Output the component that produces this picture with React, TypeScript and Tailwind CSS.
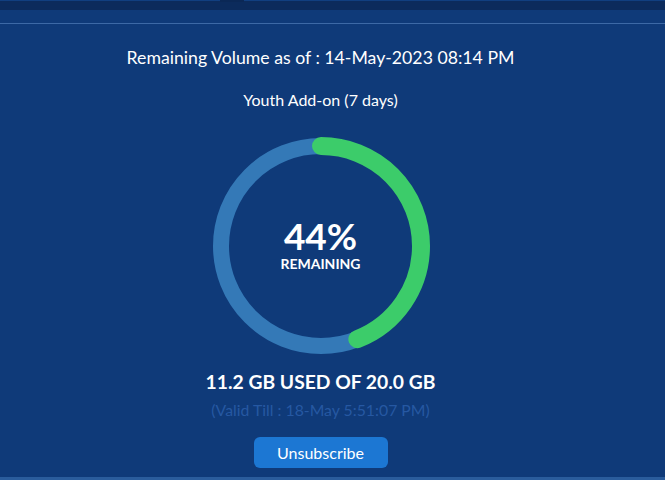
import React from 'react';

const usage = {
  asOf: '14-May-2023 08:14 PM',
  plan: 'Youth Add-on (7 days)',
  usedGb: 11.2,
  totalGb: 20.0,
  validTill: '18-May 5:51:07 PM',
};

function UsageRing({ percent }: { percent: number }) {
  const r = 100;
  const c = 2 * Math.PI * r;
  const arc = (percent / 100) * c;
  return (
    <div className="relative h-[220px] w-[220px]">
      <svg width="220" height="220" viewBox="0 0 220 220">
        <circle cx="110" cy="110" r={r} fill="none" stroke="#3479b7" strokeWidth="16" />
        <circle
          cx="110"
          cy="110"
          r={r}
          fill="none"
          stroke="#3ccc6a"
          strokeWidth="18"
          strokeLinecap="round"
          strokeDasharray={`${arc} ${c}`}
          transform="rotate(-90 110 110)"
        />
      </svg>
      <div className="absolute inset-0 flex flex-col items-center justify-center pb-[4px] text-white">
        <span className="text-[37px] font-bold leading-[36px]">{percent}%</span>
        <span className="mt-[2px] text-[14px] font-bold leading-[15px]">REMAINING</span>
      </div>
    </div>
  );
}

export default function App() {
  const remaining = Math.round(((usage.totalGb - usage.usedGb) / usage.totalGb) * 100);
  return (
    <div className="flex h-[480px] w-[665px] flex-col overflow-hidden bg-[#0f3a79] font-['Lato',sans-serif]">
      <div className="relative h-[10px] border-t border-[#113f80] bg-[#0c2b5c]">
        <div className="absolute left-[220px] top-[-1px] h-[2px] w-[24px] bg-[#0b2856]" />
      </div>
      <div className="h-[14px] border-b border-[#3d69a6]" />
      <div className="flex w-[641px] flex-1 flex-col items-center">
        <h2 className="mt-[23px] text-[17.7px] leading-[22px] text-white">
          Remaining Volume as of : {usage.asOf}
        </h2>
        <p className="mt-[21px] text-[16px] leading-[20px] text-white">{usage.plan}</p>
        <div className="mt-[26px]">
          <UsageRing percent={remaining} />
        </div>
        <p className="mt-[15px] text-[19.3px] font-bold leading-[22px] text-white">
          {usage.usedGb.toFixed(1)} GB USED OF {usage.totalGb.toFixed(1)} GB
        </p>
        <p className="mt-[7px] text-[15.8px] leading-[20px] text-[#2658a2]">
          (Valid Till : {usage.validTill})
        </p>
        <button className="mt-[17px] h-[31px] w-[134px] rounded-[6px] bg-[#1c77d3] text-[16px] text-white">
          Unsubscribe
        </button>
      </div>
      <div className="h-[3px] bg-[#2a5c9c]" />
    </div>
  );
}
